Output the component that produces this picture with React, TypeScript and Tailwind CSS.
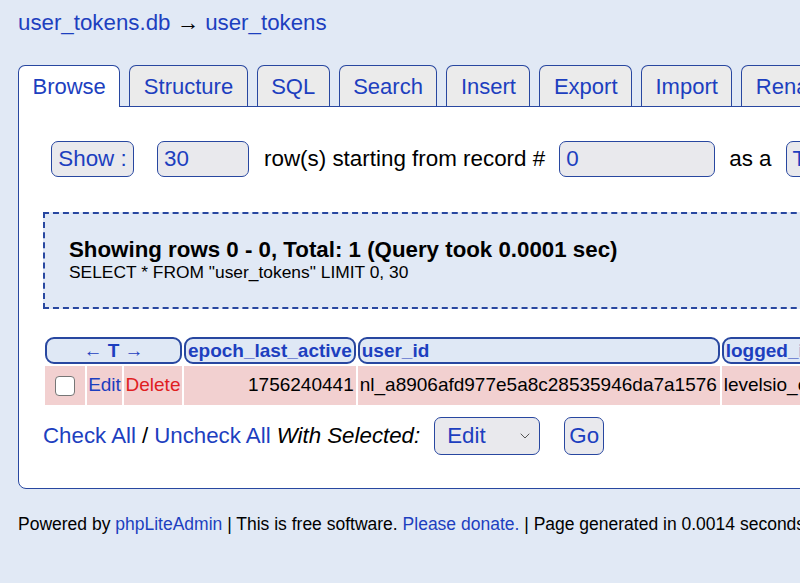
import { ChevronDown } from "lucide-react";

const tabs = ["Browse", "Structure", "SQL", "Search", "Insert", "Export", "Import", "Rename", "Empty", "Drop"];

export default function App() {
  return (
    <div className="w-[800px] h-[583px] overflow-hidden bg-[#e1e9f5] font-['Liberation_Sans',Arial,sans-serif] text-black">
      <div className="w-[1400px] pl-[18px]">
        <div className="pt-[10px] text-[22.3px] leading-[26px] text-[#1d3fbf]">
          user_tokens.db <span className="text-black">→</span> user_tokens
        </div>

        {/* tabs */}
        <div className="mt-[29px] flex items-end gap-[9px]">
          {tabs.map((t, i) =>
            i === 0 ? (
              <div
                key={t}
                className="relative -mb-px flex h-[42px] items-center rounded-t-[7px] border border-b-0 border-[#2847a0] bg-white px-[13.5px] text-[22px] text-[#1d3fbf]"
              >
                {t}
              </div>
            ) : (
              <div
                key={t}
                className="flex h-[41px] items-center rounded-t-[7px] border border-b-0 border-[#2847a0] bg-[#ebebeb] px-[13.5px] text-[22px] text-[#1d3fbf]"
              >
                {t}
              </div>
            )
          )}
        </div>

        {/* panel */}
        <div className="rounded-b-[8px] border border-[#2847a0] bg-white px-[24px] pt-[34px] pb-[33px]">
          <div className="ml-[8px] flex items-center text-[22.4px]">
            <div className="flex h-[36px] w-[83px] items-center justify-center rounded-[7px] border-[1.5px] border-[#2847a0] bg-[#e9e9ed] text-[#1d3fbf]">
              Show :
            </div>
            <div className="ml-[23px] flex h-[36px] w-[92px] items-center rounded-[7px] border-[1.5px] border-[#2847a0] bg-[#e9e9ed] pl-[6px] text-[#1d3fbf]">
              30
            </div>
            <span className="ml-[15px]">row(s) starting from record #</span>
            <div className="ml-[14px] flex h-[36px] w-[156px] items-center rounded-[7px] border-[1.5px] border-[#2847a0] bg-[#e9e9ed] pl-[6px] text-[#1d3fbf]">
              0
            </div>
            <span className="ml-[14px]">as a</span>
            <div className="ml-[14px] flex h-[36px] w-[100px] items-center rounded-[7px] border-[1.5px] border-[#2847a0] bg-[#e9e9ed] pl-[6px] text-[#1d3fbf]">
              Table
            </div>
          </div>

          <div className="mt-[35px] border-2 border-dashed border-[#2847a0] bg-[#e1e9f5] pt-[24px] pb-[24px] pl-[24px]">
            <div className="text-[22.3px] font-bold leading-[24px]">
              Showing rows 0 - 0, Total: 1 (Query took 0.0001 sec)
            </div>
            <div className="text-[17.4px] leading-[21px]">SELECT * FROM "user_tokens" LIMIT 0, 30</div>
          </div>

          <table className="mt-[26px] border-separate border-spacing-[2px] bg-white">
            <thead>
              <tr className="text-[19px] font-bold text-[#1d3fbf]">
                <th colSpan={3} className="h-[27px] rounded-[9px] border-2 border-[#2847a0] bg-[#dfe8f5] p-0 text-center font-bold leading-[22px]">
                  <span className="font-normal">←</span> T <span className="font-normal">→</span>
                </th>
                <th className="h-[27px] rounded-[9px] border-2 border-[#2847a0] bg-[#dfe8f5] px-[2px] py-0 text-left leading-[22px]">
                  epoch_last_active
                </th>
                <th className="h-[27px] rounded-[9px] border-2 border-[#2847a0] bg-[#dfe8f5] px-[2px] py-0 text-left leading-[22px]">
                  user_id
                </th>
                <th className="h-[27px] w-[260px] rounded-[9px] border-2 border-[#2847a0] bg-[#dfe8f5] px-[2px] py-0 text-left leading-[22px]">
                  logged_in_as
                </th>
              </tr>
            </thead>
            <tbody>
              <tr className="h-[39px] bg-[#f2d0d0] text-[19px]">
                <td className="w-[40px] p-0">
                  <div className="mx-auto h-[20px] w-[20px] rounded-[4px] border border-[#767676] bg-white" />
                </td>
                <td className="w-[35px] p-0 text-center text-[#1d3fbf]">Edit</td>
                <td className="w-[58px] p-0 text-center text-[#e0201f]">Delete</td>
                <td className="w-[170px] px-[2px] py-0 text-right">1756240441</td>
                <td className="w-[362px] px-[2px] py-0">nl_a8906afd977e5a8c28535946da7a1576</td>
                <td className="px-[2px] py-0">levelsio_cookie</td>
              </tr>
            </tbody>
          </table>

          <div className="mt-[10px] flex items-center text-[22.3px]">
            <span className="text-[#1d3fbf]">Check All</span>
            <span className="mx-[6px]">/</span>
            <span className="text-[#1d3fbf]">Uncheck All</span>
            <span className="ml-[6px] italic">With Selected:</span>
            <div className="ml-[14px] flex h-[38px] w-[106px] items-center justify-between rounded-[7px] border-[1.5px] border-[#2847a0] bg-[#e9e9ed] pl-[12px] pr-[6px] text-[#1d3fbf]">
              Edit
              <ChevronDown className="h-[16px] w-[16px] text-[#555]" strokeWidth={1.5} />
            </div>
            <div className="ml-[24px] flex h-[38px] w-[40px] items-center justify-center rounded-[7px] border-[1.5px] border-[#2847a0] bg-[#e9e9ed] text-[#1d3fbf]">
              Go
            </div>
          </div>
        </div>

        <div className="mt-[24px] text-[17.5px] leading-[22px]">
          Powered by <span className="text-[#1d3fbf]">phpLiteAdmin</span> | This is free software.{" "}
          <span className="text-[#1d3fbf]">Please donate.</span> | Page generated in 0.0014 seconds.
        </div>
      </div>
    </div>
  );
}
